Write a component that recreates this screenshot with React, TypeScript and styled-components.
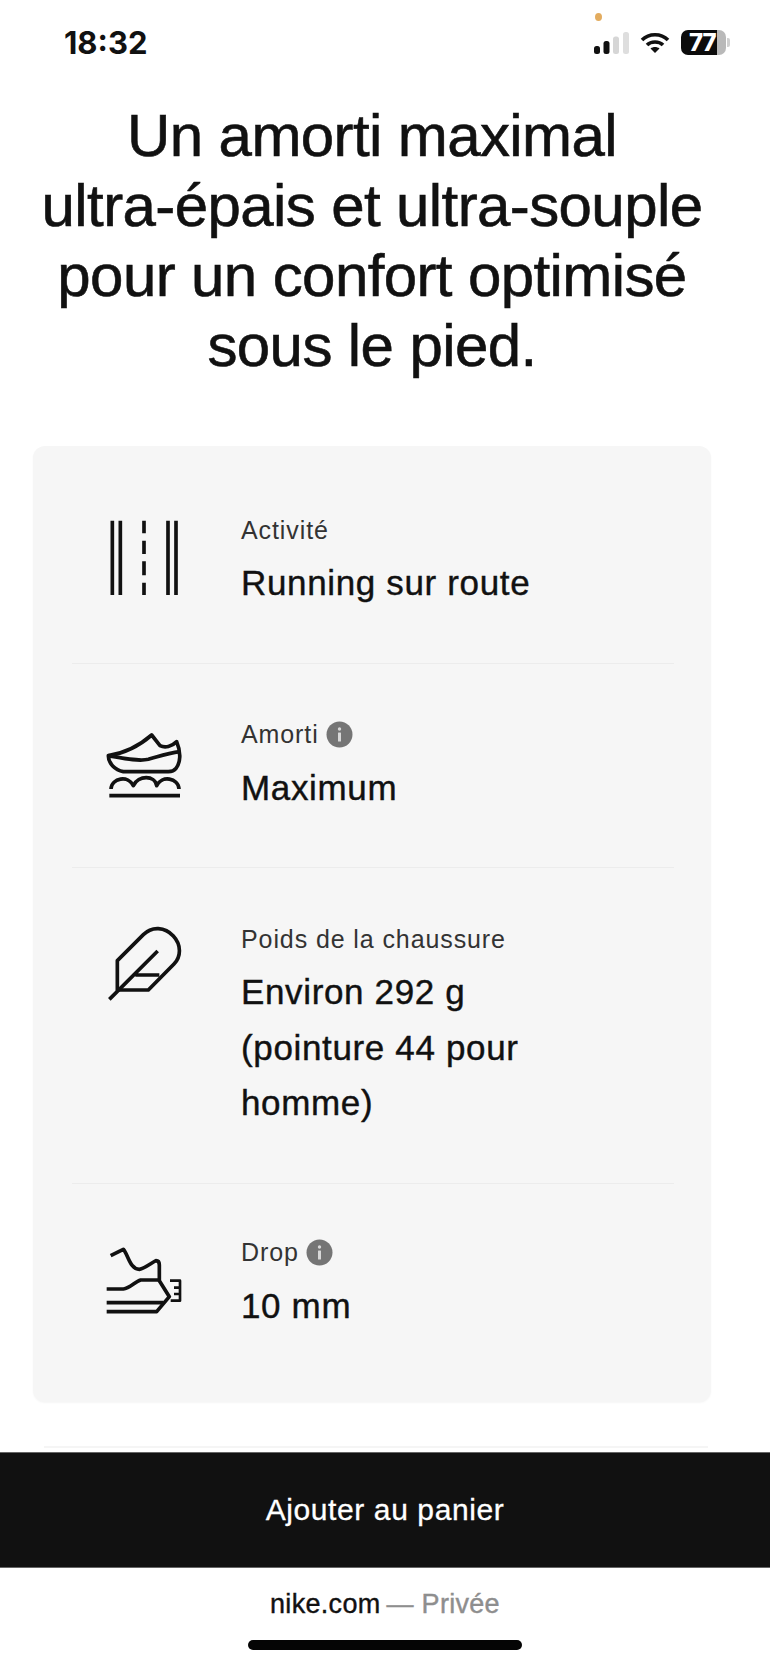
import React from "react";
import styled, { createGlobalStyle } from "styled-components";

const GlobalStyle = createGlobalStyle`
  html, body {
    margin: 0;
    padding: 0;
    background: #fff;
  }
  body {
    font-family: "Liberation Sans", Arial, sans-serif;
    color: #111;
  }
`;

const Page = styled.div`
  position: relative;
  width: 770px;
  height: 1665px;
  overflow: hidden;
  display: flex;
  flex-direction: column;
  background: #fff;
`;

const StatusBar = styled.div`
  height: 101px;
  box-sizing: border-box;
  padding: 30px 38px 0 64px;
  display: flex;
  justify-content: space-between;
  align-items: flex-start;
`;

const Clock = styled.span`
  font-family: Inter, sans-serif;
  font-size: 31px;
  line-height: 26px;
  font-weight: 700;
  color: #111;
`;

const StatusIcons = styled.div`
  display: flex;
  align-items: center;
  gap: 11px;
`;

const PrivacyDot = styled.span`
  position: absolute;
  left: 595px;
  top: 13px;
  width: 7px;
  height: 8px;
  border-radius: 50%;
  background: #e3ac5f;
`;

const Battery = styled.div`
  width: 51px;
  height: 25px;
  display: flex;
  align-items: center;
`;

const BatteryBody = styled.div`
  width: 45px;
  height: 25px;
  border-radius: 7px;
  background: linear-gradient(90deg, #0c0c0c 0 79%, #b9b9b9 79% 100%);
  color: #fff;
  font-family: Inter, sans-serif;
  font-size: 24px;
  font-weight: 800;
  line-height: 25px;
  letter-spacing: -1px;
  padding-left: 8px;
  box-sizing: border-box;
`;

const BatteryCap = styled.span`
  width: 3px;
  height: 9px;
  margin-left: 1px;
  border-radius: 0 2px 2px 0;
  background: #d0d0d0;
`;

const Headline = styled.h1`
  margin: 0;
  padding-right: 26px;
  font-size: 60px;
  line-height: 70px;
  font-weight: 400;
  letter-spacing: -0.6px;
  text-align: center;
  color: #111;
  -webkit-text-stroke: 0.6px #111;
`;

const Card = styled.section`
  width: 678px;
  height: 956px;
  box-sizing: border-box;
  margin: 65px 0 0 33px;
  padding: 13px 37px 0 39px;
  border-radius: 12px;
  background: #f6f6f6;
  box-shadow: 0 1px 2px rgba(0, 0, 0, 0.04);
`;

const Row = styled.div`
  display: grid;
  grid-template-columns: 169px 1fr;
  padding: 56px 0 52px;
  border-bottom: 1px solid #ececec;

  &:last-child {
    padding-top: 54px;
    border-bottom: 0;
  }
`;

const IconSlot = styled.div`
  padding-left: 33px;

  svg {
    display: block;
    width: 80px;
    height: 80px;
    fill: none;
    stroke: #111;
    stroke-width: 11;
    stroke-linejoin: round;
  }
`;

const Label = styled.div`
  display: flex;
  align-items: center;
  gap: 7px;
  height: 30px;
  margin-bottom: 10px;
  font-size: 25px;
  letter-spacing: 0.9px;
  color: #333;
`;

const Value = styled.div`
  font-size: 35px;
  line-height: 55.5px;
  letter-spacing: 0.65px;
  color: #111;
  max-width: 300px;
  -webkit-text-stroke: 0.4px #111;
`;

const Info = styled.svg`
  width: 27px;
  height: 27px;
  flex: none;
`;

const Divider = styled.div`
  height: 2px;
  margin: 44px 62px 0 44px;
  background: #f5f5f5;
`;

const CartButton = styled.button`
  display: block;
  width: 770px;
  height: 116px;
  margin-top: 4px;
  border: 0;
  border-top: 1px solid #666;
  border-bottom: 1px solid #666;
  background: #111;
  color: #fff;
  font-family: inherit;
  font-size: 30px;
  letter-spacing: 0.6px;
  -webkit-text-stroke: 0.3px #fff;
`;

const AddressBar = styled.div`
  height: 72px;
  display: flex;
  justify-content: center;
  align-items: center;
  gap: 6px;
  font-size: 27px;
  letter-spacing: 0.3px;
  color: #111;
  -webkit-text-stroke: 0.4px #111;
`;

const Private = styled.span`
  color: #8e8e8e;
  -webkit-text-stroke: 0.4px #8e8e8e;
`;

const HomeBar = styled.div`
  width: 274px;
  height: 10px;
  margin: 0 auto;
  border-radius: 5px;
  background: #050505;
`;

const InfoIcon = () => (
  <Info viewBox="0 0 27 27">
    <circle cx="13.5" cy="13.5" r="13" fill="#757575" />
    <rect x="12" y="11.5" width="3" height="9" rx="0.5" fill="#d8d8d8" />
    <circle cx="13.5" cy="8" r="1.7" fill="#d8d8d8" />
  </Info>
);

const RoadIcon = () => (
  <svg viewBox="75 75 240 240">
    <path d="M97 92V315M121 92V315M264 92V315M288 92V315" />
    <path d="M192 92V130M192 152V192M192 214V256M192 278V315" />
  </svg>
);

const ShoeIcon = () => (
  <svg viewBox="15 -15 240 240">
    <path d="M25 92C70 85 115 65 155 30L180 62C195 70 215 65 230 50C245 85 240 115 228 130C222 138 215 140 205 140H70C45 135 25 115 25 92Z" />
    <path d="M25 92C70 100 115 110 145 103C175 95 200 85 240 80" />
    <path d="M33 192C35 158 85 150 100 182C115 150 165 150 170 182C185 150 235 158 237 192" />
    <path d="M28 212H240" strokeWidth="11" />
  </svg>
);

const FeatherIcon = () => (
  <svg viewBox="75 72 240 240">
    <path d="M112 182L190 104C215 78 255 80 280 108C305 135 303 170 282 192L205 270H112Z" />
    <path d="M88 298L233 153M166 225H238" />
  </svg>
);

const DropIcon = () => (
  <svg viewBox="15 -6 240 240">
    <path d="M32 47L70 28C85 45 90 88 118 88C135 85 155 68 168 62C176 62 178 68 178 75V122L208 170L170 215H20" />
    <path d="M20 147H70C90 145 105 125 122 120H178" />
    <path d="M20 188H190" />
    <path d="M210 122H240V182H212M222 143H240M222 162H240" strokeWidth="8" />
  </svg>
);

const specs = [
  { label: "Activité", value: "Running sur route", icon: <RoadIcon /> },
  { label: "Amorti", value: "Maximum", icon: <ShoeIcon />, info: true },
  {
    label: "Poids de la chaussure",
    value: "Environ 292 g (pointure 44 pour homme)",
    icon: <FeatherIcon />,
  },
  { label: "Drop", value: "10 mm", icon: <DropIcon />, info: true },
];

const App = () => (
  <Page>
    <GlobalStyle />
    <StatusBar>
      <Clock>18:32</Clock>
      <StatusIcons>
        <svg width="35" height="22" viewBox="0 0 35 22">
          <rect x="0" y="14" width="6" height="8" rx="2.5" fill="#111" />
          <rect x="9.5" y="9" width="6" height="13" rx="2.5" fill="#111" />
          <rect x="19" y="4.5" width="6" height="17.5" rx="2.5" fill="#d6d6d6" />
          <rect x="29" y="0" width="6" height="22" rx="2.5" fill="#dedede" />
        </svg>
        <svg width="30" height="22" viewBox="0 0 30 22" fill="none" stroke="#111" strokeWidth="3.6">
          <path d="M2 8C9 1 21 1 28 8" />
          <path d="M7 13C11 9 19 9 23 13" />
          <path d="M15 21L10.5 16.5C13 14.5 17 14.5 19.5 16.5Z" fill="#111" stroke="none" />
        </svg>
        <Battery>
          <BatteryBody>77</BatteryBody>
          <BatteryCap />
        </Battery>
      </StatusIcons>
    </StatusBar>
    <PrivacyDot />

    <Headline>
      Un amorti maximal
      <br />
      ultra-épais et ultra-souple
      <br />
      pour un confort optimisé
      <br />
      sous le pied.
    </Headline>

    <Card>
      {specs.map((spec) => (
        <Row key={spec.label}>
          <IconSlot>{spec.icon}</IconSlot>
          <div>
            <Label>
              {spec.label}
              {spec.info && <InfoIcon />}
            </Label>
            <Value>{spec.value}</Value>
          </div>
        </Row>
      ))}
    </Card>

    <Divider />
    <CartButton>Ajouter au panier</CartButton>
    <AddressBar>
      nike.com <Private>— Privée</Private>
    </AddressBar>
    <HomeBar />
  </Page>
);

export default App;
